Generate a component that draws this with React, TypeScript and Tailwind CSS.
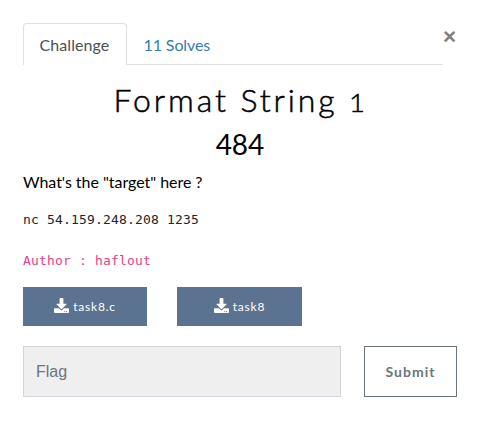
import { FaDownload } from "react-icons/fa";

const files = [
  { name: "task8.c", width: "w-[124px]" },
  { name: "task8", width: "w-[125px]" },
];

export default function App() {
  return (
    <main className="h-[435px] w-[482px] bg-white pl-[23px] pr-[25px] pt-[23px] font-['Lato',sans-serif] text-base text-black">
      <div className="flex items-start">
        <nav className="flex h-[42px] w-[420px] shrink-0 border-b border-[#dee2e6]">
          <a className="h-[42px] w-[104px] rounded-t border border-b-0 border-[#dee2e6] bg-white pl-[15.5px] pt-[9px] leading-6 tracking-[0.08px] text-[#495057]">
            Challenge
          </a>
          <a className="ml-[16.5px] pt-[10px] leading-6 tracking-[-0.1px] text-[#337ab7]">11 Solves</a>
        </nav>
        <button className="mt-[2px] h-6 font-['Liberation_Sans',sans-serif] text-[22.5px] font-bold leading-6 text-[#808080]">×</button>
      </div>

      <h2 className="mt-[15px] whitespace-nowrap text-center text-[32px] font-light leading-[40px] tracking-[2.9px] [-webkit-text-stroke:0.5px_black]">
        Format String <span className="inline-block origin-left scale-x-110 text-[25px]">1</span>
      </h2>
      <h3 className="mt-[3px] text-center text-[28px] leading-[38px]">484</h3>

      <p className="mt-[7px] leading-6 tracking-[-0.04px]">What's the "target" here ?</p>
      <pre className="mt-[16px] font-['DejaVu_Sans_Mono',monospace] text-[13px] leading-5 tracking-[0.17px] text-[#212529]">nc 54.159.248.208 1235</pre>
      <code className="mt-[21px] block font-['DejaVu_Sans_Mono',monospace] text-[13px] leading-5 tracking-[0.17px] text-[#e83e8c]">Author : haflout</code>

      <div className="mt-[16px] flex gap-[30px]">
        {files.map((file) => (
          <a
            key={file.name}
            className={`${file.width} flex h-[39px] items-center justify-center gap-[4px] bg-[#5b7290] text-xs tracking-[0.8px] text-white`}
          >
            <FaDownload className="mb-[2px] size-[15px]" />
            <span>{file.name}</span>
          </a>
        ))}
      </div>

      <form className="mt-[20px] flex gap-[23px]">
        <input
          className="h-[51px] w-[318px] border border-[#ced4da] bg-[#efefef] px-3 font-['Liberation_Sans',sans-serif] text-base placeholder:text-[#6c757d] placeholder:opacity-100"
          placeholder="Flag"
        />
        <button
          type="button"
          className="h-[51px] w-[93px] border border-[#6c757d] text-sm font-bold tracking-[1px] text-[#6c757d]"
        >
          Submit
        </button>
      </form>
    </main>
  );
}
